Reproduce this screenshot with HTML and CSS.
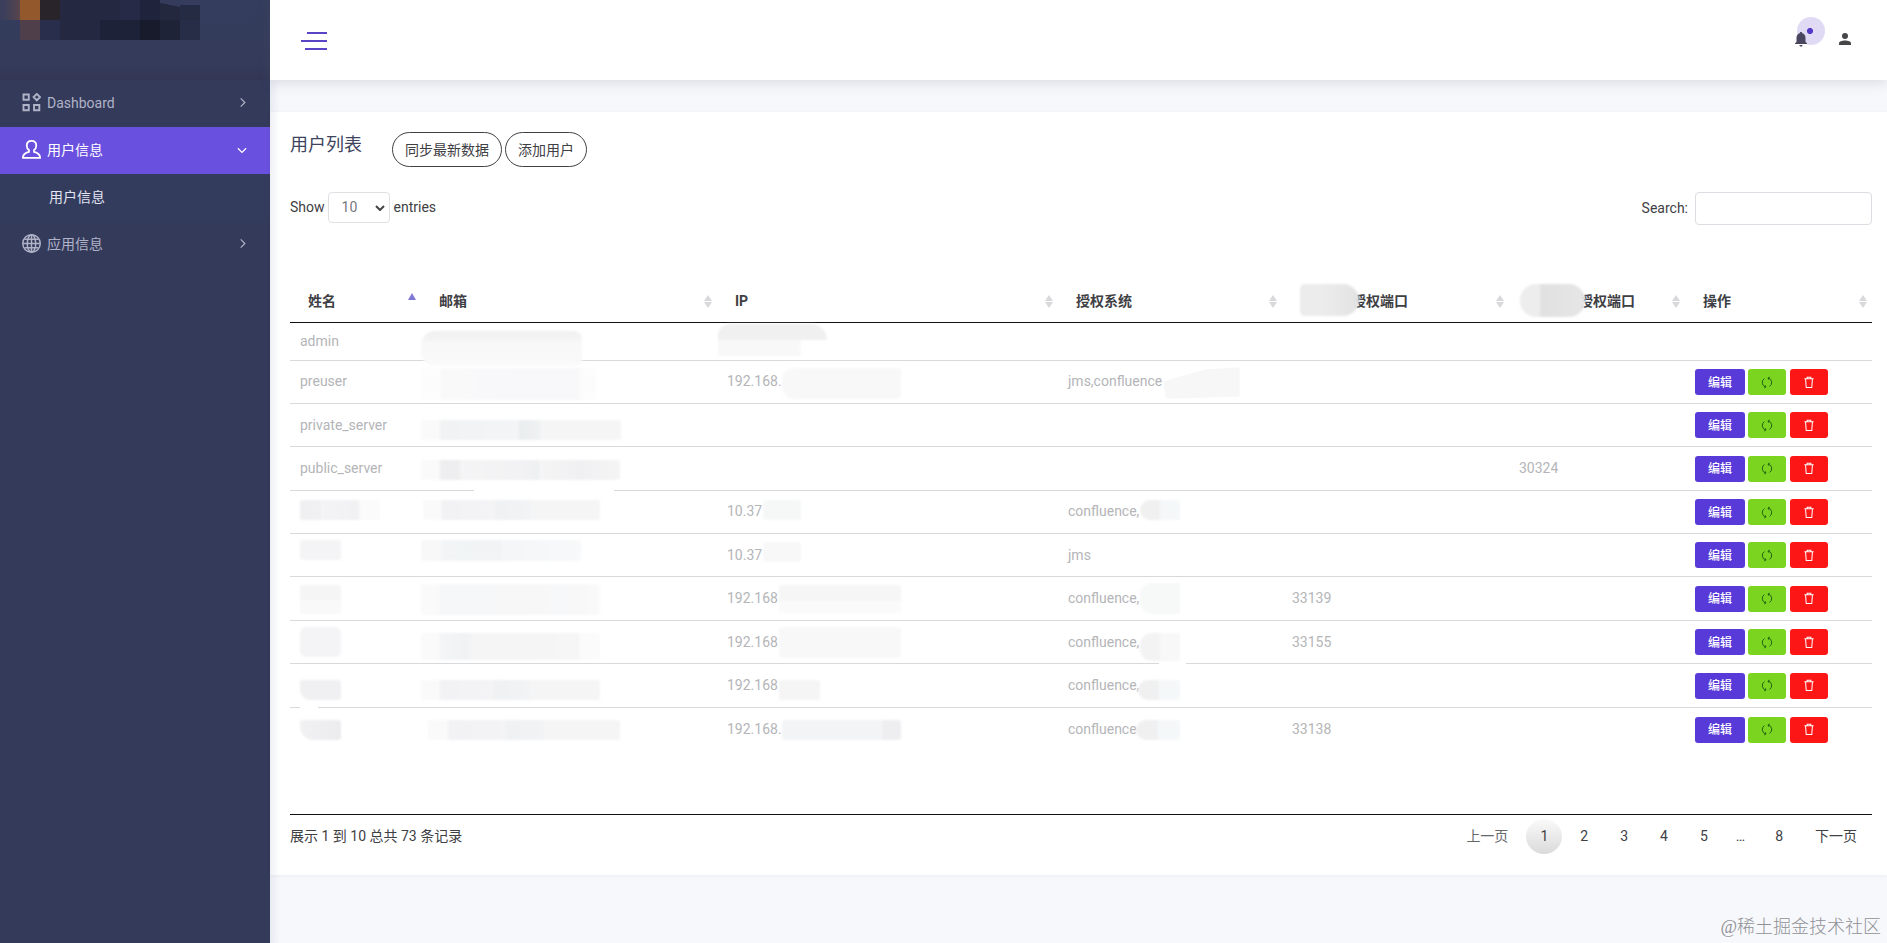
FILE: index.html
```html
<!DOCTYPE html>
<html lang="zh-CN">
<head>
    <meta charset="UTF-8">
    <meta name="viewport" content="width=device-width, initial-scale=1.0">
    <title>用户列表</title>
    <link rel="stylesheet" href="styles.css">
</head>
<body>

<!-- shared icons -->
<svg class="icon-defs" aria-hidden="true">
    <symbol id="i-right" viewBox="0 0 8 12"><path d="M1.5 1.5 6 6 1.5 10.5" fill="none" stroke="currentColor" stroke-width="1.3"/></symbol>
    <symbol id="i-sync" viewBox="0 0 14 14">
        <g fill="none" stroke="currentColor" stroke-width="1.1">
            <path d="M5.500 12.300A5.500 5.500 0 0 1 4 2.400"/>
            <path d="M8.500 1.700A5.500 5.500 0 0 1 10 11.600"/>
            <path d="M3.800 13.300 5.800 12.300 5 10.300M10.200.7 8.200 1.700 9 3.700"/>
        </g>
    </symbol>
    <symbol id="i-trash" viewBox="0 0 12 14">
        <path d="M1 3h10M4 3V1.3h4V3M2.3 3l.7 9.5h6L9.700 3" fill="none" stroke="currentColor" stroke-width="1.1"/>
    </symbol>
</svg>

<aside class="sidebar">
    <div class="brand">
        <div class="brand-logo">
            <i></i><i></i><i></i><i></i><i></i><i></i><i></i><i></i><i></i><i></i>
            <i></i><i></i><i></i><i></i><i></i><i></i><i></i><i></i><i></i><i></i>
        </div>
    </div>
    <ul class="menu">
        <li>
            <a class="menu-item">
                <svg class="menu-icon" viewBox="0 0 18 18" fill="none" stroke="currentColor" stroke-width="1.8">
                    <path d="M1.4 1.4h5v5h-5zM1.4 11.4h5v5h-5zM11.4 11.4h5v5h-5zM14 .9l3 3-3 3-3-3z"/>
                </svg>
                <span>Dashboard</span>
                <svg class="menu-arrow"><use href="#i-right"/></svg>
            </a>
        </li>
        <li>
            <a class="menu-item active">
                <svg class="menu-icon" viewBox="0 0 18 18" fill="none" stroke="currentColor" stroke-width="1.7">
                    <path d="M6.6 9.6C5 8.600 4.500 7.200 4.500 5.300 4.500 2.600 6.200.900 9 .900s4.500 1.700 4.500 4.400c0 1.900-.5 3.300-2.100 4.300v1.600c3.300.9 5.700 2.200 5.700 5.200v.6H.9v-.6c0-3 2.400-4.300 5.700-5.200z"/>
                </svg>
                <span>用户信息</span>
                <svg class="menu-arrow down"><use href="#i-right"/></svg>
            </a>
            <ul class="submenu">
                <li><a class="menu-item">用户信息</a></li>
            </ul>
        </li>
        <li>
            <a class="menu-item">
                <svg class="menu-icon" viewBox="0 0 18 18" fill="none" stroke="currentColor" stroke-width="1.4">
                    <circle cx="9" cy="9" r="8.300"/>
                    <ellipse cx="9" cy="9" rx="4" ry="8.300"/>
                    <path d="M9 1v16M1 9h16M2.300 5h13.400M2.300 13h13.400"/>
                </svg>
                <span>应用信息</span>
                <svg class="menu-arrow"><use href="#i-right"/></svg>
            </a>
        </li>
    </ul>
</aside>

<div class="main">
    <header class="topbar">
        <div class="hamburger"><span></span><span></span><span></span></div>
        <div class="topbar-right">
            <div class="notify">
                <span class="pulse"></span>
                <svg class="bell" viewBox="0 0 12 15" fill="#49465f">
                    <path d="M6 0c.8 0 1.200.5 1.200 1.200C9.400 1.700 10.500 3.500 10.500 6v4L12 11.300V12H0v-.7L1.500 10V6c0-2.500 1.100-4.300 3.300-4.800C4.800.5 5.200 0 6 0zM4.500 13h3c0 .9-.6 1.600-1.500 1.600S4.500 13.900 4.500 13z"/>
                </svg>
            </div>
            <svg class="person" viewBox="0 0 12 12" fill="#464648">
                <circle cx="6" cy="3" r="3"/><path d="M0 12v-1.600C0 8.400 3 7.500 6 7.500s6 .9 6 2.900V12z"/>
            </svg>
        </div>
    </header>

    <div class="card">
        <div class="card-head">
            <h4>用户列表</h4>
            <button class="btn-round">同步最新数据</button>
            <button class="btn-round">添加用户</button>
        </div>

        <div class="table-tools">
            <label class="length"><span>Show</span>
                <span class="select"><span>10</span><svg viewBox="0 0 10 6"><path d="M1 1l4 4 4-4" fill="none" stroke="#444" stroke-width="2"/></svg></span>
                <span>entries</span></label>
            <label class="filter"><span>Search:</span><input type="text"></label>
        </div>

        <div class="table-wrap">
            <table>
                <colgroup>
                    <col class="c-name"><col class="c-mail"><col class="c-ip"><col class="c-sys"><col class="c-port"><col class="c-port2"><col>
                </colgroup>
                <thead>
                    <tr>
                        <th class="asc">姓名</th>
                        <th>邮箱</th>
                        <th>IP</th>
                        <th>授权系统</th>
                        <th class="masked"><span class="mask"></span>授权端口</th>
                        <th class="masked"><span class="mask"></span>授权端口</th>
                        <th>操作</th>
                    </tr>
                </thead>
                <tbody>
                    <tr class="r1">
                        <td>admin</td>
                        <td><span class="mask mail"></span></td>
                        <td><span class="mask ip"></span></td>
                        <td></td><td></td><td></td><td></td>
                    </tr>
                    <tr class="r2">
                        <td>preuser</td>
                        <td><span class="mask mail"></span></td>
                        <td>192.168.<span class="mask ip"></span></td>
                        <td>jms,confluence<span class="mask sys"></span></td>
                        <td></td><td></td>
                        <td><div class="ops"><button class="edit">编辑</button><button class="sync"><svg><use href="#i-sync"/></svg></button><button class="del"><svg><use href="#i-trash"/></svg></button></div></td>
                    </tr>
                    <tr class="r3">
                        <td>private_server</td>
                        <td><span class="mask mail"></span></td>
                        <td></td><td></td><td></td><td></td>
                        <td><div class="ops"><button class="edit">编辑</button><button class="sync"><svg><use href="#i-sync"/></svg></button><button class="del"><svg><use href="#i-trash"/></svg></button></div></td>
                    </tr>
                    <tr class="r4">
                        <td>public_server</td>
                        <td><span class="mask mail"></span><span class="gap"></span></td>
                        <td></td><td></td><td></td>
                        <td>30324</td>
                        <td><div class="ops"><button class="edit">编辑</button><button class="sync"><svg><use href="#i-sync"/></svg></button><button class="del"><svg><use href="#i-trash"/></svg></button></div></td>
                    </tr>
                    <tr class="r5">
                        <td><span class="mask name"></span></td>
                        <td><span class="mask mail"></span></td>
                        <td>10.37<span class="mask ip"></span></td>
                        <td>confluence,<span class="mask sys"></span></td>
                        <td></td><td></td>
                        <td><div class="ops"><button class="edit">编辑</button><button class="sync"><svg><use href="#i-sync"/></svg></button><button class="del"><svg><use href="#i-trash"/></svg></button></div></td>
                    </tr>
                    <tr class="r6">
                        <td><span class="mask name"></span></td>
                        <td><span class="mask mail"></span></td>
                        <td>10.37<span class="mask ip"></span></td>
                        <td>jms</td>
                        <td></td><td></td>
                        <td><div class="ops"><button class="edit">编辑</button><button class="sync"><svg><use href="#i-sync"/></svg></button><button class="del"><svg><use href="#i-trash"/></svg></button></div></td>
                    </tr>
                    <tr class="r7">
                        <td><span class="mask name"></span></td>
                        <td><span class="mask mail"></span></td>
                        <td>192.168<span class="mask ip"></span></td>
                        <td>confluence,<span class="mask sys"></span></td>
                        <td>33139</td><td></td>
                        <td><div class="ops"><button class="edit">编辑</button><button class="sync"><svg><use href="#i-sync"/></svg></button><button class="del"><svg><use href="#i-trash"/></svg></button></div></td>
                    </tr>
                    <tr class="r8">
                        <td><span class="mask name"></span></td>
                        <td><span class="mask mail"></span></td>
                        <td>192.168<span class="mask ip"></span></td>
                        <td>confluence,<span class="mask sys"></span><span class="gap"></span></td>
                        <td>33155</td><td></td>
                        <td><div class="ops"><button class="edit">编辑</button><button class="sync"><svg><use href="#i-sync"/></svg></button><button class="del"><svg><use href="#i-trash"/></svg></button></div></td>
                    </tr>
                    <tr class="r9">
                        <td><span class="mask name"></span><span class="gap"></span></td>
                        <td><span class="mask mail"></span></td>
                        <td>192.168<span class="mask ip"></span></td>
                        <td>confluence,<span class="mask sys"></span></td>
                        <td></td><td></td>
                        <td><div class="ops"><button class="edit">编辑</button><button class="sync"><svg><use href="#i-sync"/></svg></button><button class="del"><svg><use href="#i-trash"/></svg></button></div></td>
                    </tr>
                    <tr class="r10">
                        <td><span class="mask name"></span></td>
                        <td><span class="mask mail"></span></td>
                        <td>192.168.<span class="mask ip"></span></td>
                        <td>confluence<span class="mask sys"></span></td>
                        <td>33138</td><td></td>
                        <td><div class="ops"><button class="edit">编辑</button><button class="sync"><svg><use href="#i-sync"/></svg></button><button class="del"><svg><use href="#i-trash"/></svg></button></div></td>
                    </tr>
                </tbody>
            </table>
        </div>

        <div class="table-foot">
            <div class="info">展示 1 到 10 总共 73 条记录</div>
            <div class="pages">
                <a class="prev">上一页</a><a class="current">1</a><a>2</a><a>3</a><a>4</a><a>5</a><span>…</span><a>8</a><a>下一页</a>
            </div>
        </div>
    </div>

    <footer class="watermark">@稀土掘金技术社区</footer>
</div>

</body>
</html>
```

FILE: styles.css
```css
* {
    box-sizing: border-box;
}

body {
    margin: 0;
    height: 100vh;
    display: flex;
    overflow: hidden;
    background: #f7f8fc;
    color: #3e4044;
    font: 14px/20px Roboto, "Noto Sans CJK SC", sans-serif;
}

ul {
    list-style: none;
    margin: 0;
    padding: 0;
}

button {
    font-family: inherit;
    cursor: pointer;
}

.icon-defs {
    position: absolute;
    width: 0;
    height: 0;
}

/* Sidebar */
.sidebar {
    width: 270px;
    flex: none;
    background: #343a5a;
    color: #b0b3c8;
}

.brand {
    height: 80px;
    background: linear-gradient(#353d5e, #343b5b 80%, #333755);
}

.brand-logo {
    display: grid;
    grid-template-columns: repeat(10, 20px);
    grid-auto-rows: 20px;
    width: 200px;
}

/* pixelated logo tiles */
.brand-logo i { background: #242941; }
.brand-logo i:nth-child(1) { background: linear-gradient(90deg, #3b3f5b 20%, #59454d); }
.brand-logo i:nth-child(2) { background: #93592c; }
.brand-logo i:nth-child(3) { background: #292429; }
.brand-logo i:nth-child(7) { background: #262a47; }
.brand-logo i:nth-child(8) { background: #1f233b; }
.brand-logo i:nth-child(9) { background: linear-gradient(12deg, #23283f 70%, #343b5b 72%); }
.brand-logo i:nth-child(10) { background: linear-gradient(#353c5d 25%, #262b44 26%); }
.brand-logo i:nth-child(11) { background: none; }
.brand-logo i:nth-child(12) { background: #4f3f4b; }
.brand-logo i:nth-child(13) { background: #292e4c; }
.brand-logo i:nth-child(16),
.brand-logo i:nth-child(17) { background: #1d2238; }
.brand-logo i:nth-child(18) { background: #171b2b; }
.brand-logo i:nth-child(19) { background: #1e2338; }
.brand-logo i:nth-child(20) { background: #272c47; }

.menu-item {
    display: flex;
    align-items: center;
    height: 47px;
    padding: 0 23px 2px 22px;
}

.menu-item.active {
    background: #6a50de;
    color: #fff;
}

.menu-icon {
    width: 19px;
    height: 19px;
    margin-right: 6px;
}

.menu-arrow {
    width: 8px;
    height: 11px;
    margin-left: auto;
}

.menu-arrow.down {
    margin-right: 1px;
    transform: translateY(1px) rotate(90deg);
}

.submenu {
    background: #343c5e;
}

.submenu .menu-item {
    padding-left: 49px;
    color: #e2e5f2;
}

/* Top bar */
.main {
    flex: 1;
    min-width: 0;
    position: relative;
    display: flex;
    flex-direction: column;
}

.main::before {
    /* shade along the sidebar edge */
    content: "";
    position: absolute;
    z-index: 1;
    left: 0;
    top: 80px;
    bottom: 0;
    width: 10px;
    background: linear-gradient(90deg, rgba(120, 135, 170, 0.12), rgba(120, 135, 170, 0));
}

.topbar {
    height: 80px;
    flex: none;
    display: flex;
    justify-content: space-between;
    align-items: center;
    padding: 0 36px 0 31px;
    background: #fff;
    box-shadow: 0 3px 12px rgba(90, 95, 110, 0.18);
}

.hamburger {
    display: flex;
    flex-direction: column;
    align-items: flex-end;
    gap: 6px;
    width: 26px;
    margin-top: 2px;
}

.hamburger span {
    height: 2px;
    width: 26px;
    background: #5b45c6;
}

.hamburger span:first-child { width: 20px; }
.hamburger span:last-child { width: 22px; }

.topbar-right {
    display: flex;
    align-items: center;
    gap: 32px;
    padding-bottom: 2px;
}

.notify {
    position: relative;
    width: 12px;
    height: 15px;
}

.bell {
    position: relative;
    display: block;
    width: 12px;
    height: 15px;
}

.pulse {
    position: absolute;
    left: 2px;
    top: -15px;
    width: 28px;
    height: 28px;
    border-radius: 50%;
    background: radial-gradient(circle at 13px 14px, #5339c4 2.700px, #e0daf5 3.400px);
}

.person {
    width: 12px;
    height: 12px;
}

/* Card */
.card {
    height: 763px;
    flex: none;
    margin-top: 32px;
    padding: 20px 15px 0 20px;
    background: #fff;
    box-shadow: 0 1px 4px rgba(60, 70, 90, 0.06);
}

.card-head {
    display: flex;
    height: 35px;
}

.card-head h4 {
    width: 102px;
    margin: 0;
    color: #3e4460;
    font-size: 18px;
    font-weight: 400;
    line-height: 26px;
}

.btn-round {
    height: 35px;
    margin-right: 3px;
    padding: 0 12px 2px;
    border: 1px solid #3e4044;
    border-radius: 18px;
    background: #fff;
    color: #3e4044;
    font-size: 14px;
}

.table-tools {
    display: flex;
    justify-content: space-between;
    margin-top: 25px;
}

.length,
.filter {
    display: flex;
    align-items: center;
}

.length {
    height: 31px;
    gap: 4px;
}

.length span,
.filter span {
    padding-bottom: 1px;
}

.length .select {
    display: flex;
    align-items: center;
    justify-content: space-between;
    width: 62px;
    height: 31px;
    margin-left: -1px;
    padding: 0 4px 0 13px;
    border: 1px solid #dfe0e4;
    border-radius: 4px;
    color: #76787e;
}

.select svg {
    width: 10px;
    height: 6px;
}

.filter input {
    width: 177px;
    height: 33px;
    margin-left: 7px;
    border: 1px solid #dcdde2;
    border-radius: 4px;
}

/* Table */
.table-wrap {
    height: 535px;
    margin-top: 55px;
    border-bottom: 1px solid #111;
}

table {
    width: 100%;
    table-layout: fixed;
    border-collapse: separate;
    border-spacing: 0;
}

.c-name { width: 131px; }
.c-mail { width: 296px; }
.c-ip { width: 341px; }
.c-sys { width: 224px; }
.c-port { width: 227px; }
.c-port2 { width: 176px; }

th {
    position: relative;
    height: 43px;
    padding: 0 18px;
    border-bottom: 1px solid #111;
    text-align: left;
    font-weight: 700;
}

/* sort arrows */
th::before,
th::after {
    content: "";
    position: absolute;
    right: 5px;
    border: 4px solid transparent;
}

th::before {
    top: 11px;
    border-bottom: 6px solid #d9d9dc;
}

th::after {
    top: 22px;
    border-top: 6px solid #d9d9dc;
}

th.asc::before {
    top: 9px;
    border-bottom: 7px solid #8079d3;
}

th.asc::after {
    display: none;
}

th.masked {
    padding-left: 70px;
}

th .mask {
    left: 18px;
    top: 4px;
    width: 59px;
    height: 32px;
    border-radius: 5px 18px 18px 5px;
    background: linear-gradient(90deg, #ececec 33%, #e8e8e8 67%, #e2e2e2);
}

th.masked + th.masked {
    padding-left: 70px;
}

th.masked + th.masked .mask {
    left: 11px;
    width: 65px;
    height: 33px;
    border-radius: 16px;
    background: linear-gradient(90deg, #ededed 30%, #e1e1e1 32%, #e6e6e6);
}

td {
    position: relative;
    height: 43px;
    padding: 0 10px 1px;
    border-bottom: 1px solid #d9d9db;
    color: #b4b5b8;
    white-space: nowrap;
}

.r1 td { height: 38px; }
.r2 td:not(:last-child),
.r5 td:not(:last-child) { padding-bottom: 3px; }
.r4 td, .r7 td, .r9 td { height: 44px; }
.r10 td { border-bottom: none; }

.ops {
    display: flex;
    padding-top: 1px;
}

.ops button {
    display: flex;
    align-items: center;
    justify-content: center;
    width: 38px;
    height: 26px;
    padding: 0;
    border: none;
    border-radius: 3px;
    color: #fff;
    font-size: 12px;
    font-weight: 500;
}

.ops .edit {
    width: 50px;
    margin-right: 3px;
    padding-bottom: 2px;
    background: #583ad8;
}

.ops .sync {
    margin-right: 4px;
    background: #7bd41f;
    color: #1d5c14;
}

.ops .del {
    background: #fd1616;
}

.ops svg {
    width: 12px;
    height: 13px;
}

/* Pixelated patches over private values */
.mask,
.gap {
    position: absolute;
}

.gap {
    bottom: -2px;
    height: 3px;
    background: #fff;
}

.mask {
    border-radius: 3px;
    filter: blur(1px);
}

.name {
    left: 10px;
    top: 10px;
    width: 41px;
    height: 20px;
    background: #f4f4f6;
}

.mail {
    left: 0;
    top: 10px;
    width: 179px;
    height: 20px;
    background: linear-gradient(90deg, #fafafa 10%, #f2f2f4 11%, #f4f4f6 40%, #f0f1f2 41%, #f1f3f5 60%, #f5f5f6 61%);
}

.ip {
    left: 62px;
    top: 8px;
    width: 122px;
    height: 28px;
    background: #f8f8f9;
}

.sys {
    left: 82px;
    top: 9px;
    width: 40px;
    height: 20px;
    border-radius: 12px 2px 2px 12px;
    background: linear-gradient(90deg, #f0f0f1 50%, #f5f8f9 51%);
}

.r1 .mail { z-index: 1; top: 8px; width: 161px; height: 35px; border-radius: 14px 8px 6px 14px; background: linear-gradient(#f1f1f1, #f3f3f3 20%, #f8f8f9 35%, #fafafa); }
.r1 .ip { left: 1px; top: 1px; width: 109px; height: 32px; border-radius: 12px 16px 0 0; background: linear-gradient(#f0f0f0 50%, transparent 51%), linear-gradient(90deg, #f8f8f8 75%, transparent 76%); }
.r2 .mail { top: 7px; width: 175px; height: 32px; background: linear-gradient(90deg, #fcfcfc 11%, #f9f9fa 12%, #f8f8fa 90%, #fcfcfc 91%); }
.r2 .ip { left: 65px; top: 7px; width: 119px; height: 31px; border-radius: 12px 3px 3px 12px; }
.r2 .sys { left: 105px; top: 6px; width: 77px; height: 32px; border-radius: 4px; background: #f7f7f8; clip-path: polygon(0 45%, 55% 8%, 100% 0, 100% 92%, 4% 100%); }
.r3 .mail { top: 16px; width: 200px; background: linear-gradient(90deg, #fafafa 9%, #f1f2f3 10%, #f4f5f6 48%, #eaeeef 50%, #eff1f2 59%, #f5f5f6 60%); }
.r4 .mail { top: 13px; width: 199px; background: linear-gradient(90deg, #fafafa 9%, #eeeef0 10%, #eeeef0 19%, #f5f5f6 20%, #f2f2f4 50%, #eff0f1 59%, #f5f5f6 60%, #f0f0f2 80%, #f5f5f6); }
.r4 .gap { left: 53px; width: 140px; }
.r5 .name { top: 9px; width: 80px; background: linear-gradient(90deg, #f0f0f2 25%, #f4f4f6 26%, #f1f1f3 73%, #fbfbfc 75%); }
.r5 .mail { top: 9px; left: 2px; width: 177px; }
.r5 .ip { left: 46px; top: 9px; width: 38px; height: 20px; background: #f6f8f8; }
.r6 .name { top: 6px; }
.r6 .mail { top: 6px; width: 160px; height: 21px; background: linear-gradient(90deg, #f8f8f9 12%, #f2f5f6 13%, #f1f3f5 50%, #f4f6f7 51%, #f8f9fa); }
.r6 .ip { left: 46px; width: 38px; height: 20px; }
.r7 .name { top: 8px; height: 29px; background: linear-gradient(#f5f5f6 50%, #f9f9f9 51%); }
.r7 .mail { top: 7px; height: 31px; background: linear-gradient(90deg, #fafafb 10%, #f6f7f8 11%, #f8f8f9 90%, #fafafa); }
.r7 .ip { background: linear-gradient(#f6f6f7 55%, #fafafa 57%); }
.r7 .sys { top: 6px; height: 31px; background: #f7f8f8; }
.r8 .name { top: 6px; height: 30px; border-radius: 6px; }
.r8 .mail { top: 12px; height: 27px; background: linear-gradient(90deg, #fafafa 10%, #f4f5f6 11%, #f1f2f4 25%, #f5f5f6 30%, #f6f6f7 88%, #fbfbfb 89%); }
.r8 .ip { top: 6px; height: 31px; }
.r8 .sys { top: 12px; height: 28px; background: linear-gradient(90deg, #f3f3f4 50%, #f8f8f8 51%); }
.r8 .gap { left: 101px; width: 27px; }
.r9 .name { top: 16px; border-radius: 3px 3px 3px 10px; background: #f0f0f2; }
.r9 .mail { top: 16px; }
.r9 .ip { top: 16px; width: 41px; height: 20px; background: #f5f5f6; }
.r9 .sys { top: 16px; left: 80px; width: 42px; }
.r9 .gap { left: 10px; width: 18px; }
.r10 .name { top: 12px; border-radius: 3px 3px 3px 14px; background: linear-gradient(90deg, #f1f1f3, #ececee); }
.r10 .mail { top: 12px; left: 7px; width: 192px; }
.r10 .ip { left: 65px; top: 12px; width: 119px; height: 20px; background: linear-gradient(90deg, #f3f4f6 84%, #eeeef0 85%); }
.r10 .sys { top: 12px; left: 78px; width: 44px; }

/* Info and pagination */
.table-foot {
    display: flex;
    justify-content: space-between;
    padding-top: 4px;
    line-height: 35px;
}

.pages {
    display: flex;
}

.pages a,
.pages span {
    margin-left: 4px;
    padding: 0 14px;
}

.pages span {
    margin-left: 2px;
    padding: 0 12px;
}

.pages a:last-child {
    padding-right: 15px;
}

.pages .prev {
    color: #66686c;
}

.pages .current {
    border-radius: 50%;
    background: linear-gradient(#fafafa, #dadada);
}

.watermark {
    margin: 38px 6px 0 0;
    color: #909196;
    font: 300 18px/28px "Liberation Serif", "Noto Sans CJK SC", serif;
    text-align: right;
}
```
